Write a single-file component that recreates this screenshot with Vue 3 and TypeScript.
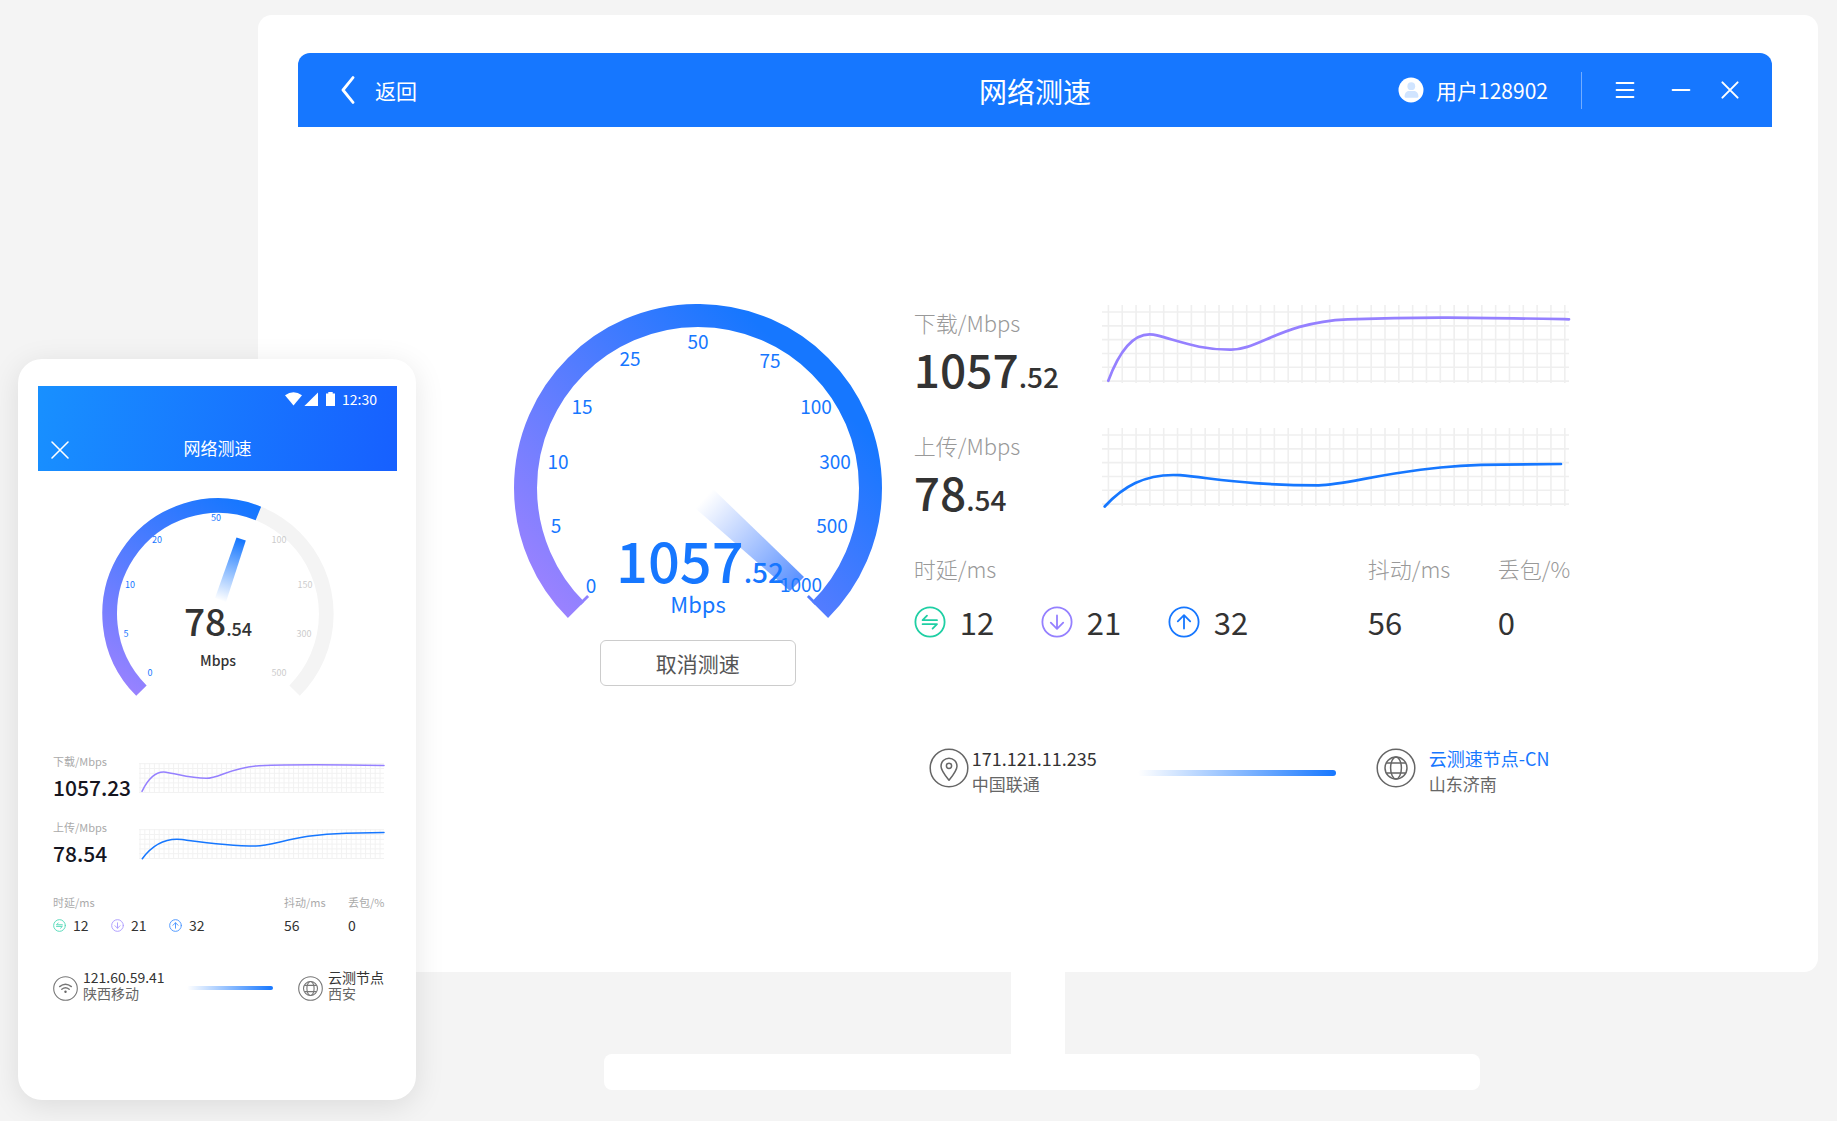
<script setup lang="ts">
interface Label {
  text: string
  x: number
  y: number
  dim?: boolean
}

interface Latency {
  kind: 'ping' | 'down' | 'up'
  value: number
}

interface Grid {
  width: number
  height: number
  x: number
  y: number
  step: number
}

const desktopLabels: Label[] = [
  { text: '0', x: 77, y: 281 },
  { text: '5', x: 42, y: 221 },
  { text: '10', x: 44, y: 157 },
  { text: '15', x: 68, y: 102 },
  { text: '25', x: 116, y: 54 },
  { text: '50', x: 184, y: 37 },
  { text: '75', x: 256, y: 56 },
  { text: '100', x: 302, y: 102 },
  { text: '300', x: 321, y: 157 },
  { text: '500', x: 318, y: 221 },
  { text: '1000', x: 287, y: 280 },
]

const phoneLabels: Label[] = [
  { text: '0', x: 48, y: 177 },
  { text: '5', x: 24, y: 138 },
  { text: '10', x: 28, y: 89 },
  { text: '20', x: 55, y: 44 },
  { text: '50', x: 114, y: 22 },
  { text: '100', x: 177, y: 44, dim: true },
  { text: '150', x: 203, y: 89, dim: true },
  { text: '300', x: 202, y: 138, dim: true },
  { text: '500', x: 177, y: 177, dim: true },
]

const latencies: Latency[] = [
  { kind: 'ping', value: 12 },
  { kind: 'down', value: 21 },
  { kind: 'up', value: 32 },
]

const glyphs: Record<Latency['kind'], string> = {
  ping: 'M23 14.2H8.6L13 9.6M8.6 18.2H23L18.6 22.6',
  down: 'M16 9.4V22.6M9.8 16.6L16 22.8L22.2 16.6',
  up: 'M16 22.6V9.2M9.8 15.4L16 9.2L22.2 15.4',
}

function gridPath(g: Grid): string {
  let d = ''
  for (let x = g.x; x < g.width; x += g.step) d += `M${x.toFixed(2)} 0V${g.height}`
  for (let y = g.y; y < g.height; y += g.step) d += `M0 ${y.toFixed(2)}H${g.width}`
  return d
}

const desktopGrid = gridPath({ width: 467, height: 78, x: 6.4, y: 7, step: 13.83 })
const phoneGrid = gridPath({ width: 245, height: 30, x: 1, y: 0.7, step: 4.8 })

const metrics = [
  {
    name: '下载/Mbps',
    whole: '1057',
    fraction: '.52',
    color: '#9580ff',
    line: 'M6.3 75.7C17 47 32 24 55 30.4C80 37 98 44.7 128 44.7C156 45.5 180 17 245.7 14.3C320 11.5 370 12.5 467 14.3',
  },
  {
    name: '上传/Mbps',
    whole: '78',
    fraction: '.54',
    color: '#1677ff',
    line: 'M2.7 78.5C20 60 42 45 78 47.2C120 51.5 150 57.3 216.7 57.3C250 57 300 37 400 36.7L459 36',
  },
]

const phoneMetrics = [
  {
    name: '下载/Mbps',
    value: '1057.23',
    color: '#9580ff',
    line: 'M3 28.3C9 16 16 7.5 27 9.2C41 11.6 52 15.3 67.3 15.3C80 15.3 92 4.2 120 2.7C158 1.2 195 1.6 245 2.5',
  },
  {
    name: '上传/Mbps',
    value: '78.54',
    color: '#1677ff',
    line: 'M3.3 29.7C12 18 24 8.4 43 10.6C68 14 88 17 117 17C135 16.6 160 4.8 207 4.2L245 3.6',
  },
]
</script>

<template>
  <div class="stage">
    <section class="monitor">
      <div class="screen">
        <header class="titlebar">
          <button class="back" type="button">
            <svg width="16" height="28" viewBox="0 0 16 28" fill="none" stroke="#fff" stroke-width="2.8" stroke-linecap="round" stroke-linejoin="round">
              <path d="M13 1.6L3 14L13 26.4" />
            </svg>
            <span>返回</span>
          </button>
          <h1>网络测速</h1>
          <div class="tools">
            <a class="user" href="#">
              <svg width="26" height="26" viewBox="0 0 26 26">
                <circle cx="13" cy="13" r="12.5" fill="#fff" />
                <circle cx="13.3" cy="9.2" r="3.9" fill="#d0e4ff" />
                <path d="M6.6 19.4C6.6 15.4 9 13.9 11 13.9H15.8C18 13.9 20.4 15.4 20.4 19.4Q20.4 20.8 19.2 20.8H7.8Q6.6 20.8 6.6 19.4Z" fill="#d0e4ff" />
              </svg>
              <span>用户128902</span>
            </a>
            <i class="divider"></i>
            <button type="button" aria-label="菜单">
              <svg width="20" height="20" viewBox="0 0 20 20" stroke="#fff" stroke-width="2" stroke-linecap="round">
                <path d="M1.6 3H18.4M1.6 10H18.4M1.6 17H18.4" />
              </svg>
            </button>
            <button type="button" aria-label="最小化">
              <svg width="20" height="20" viewBox="0 0 20 20" stroke="#fff" stroke-width="2" stroke-linecap="round">
                <path d="M1.6 10H18.4" />
              </svg>
            </button>
            <button type="button" aria-label="关闭">
              <svg width="20" height="20" viewBox="0 0 20 20" stroke="#fff" stroke-width="2" stroke-linecap="round">
                <path d="M2.4 2.4L17.6 17.6M17.6 2.4L2.4 17.6" />
              </svg>
            </button>
          </div>
        </header>

        <main class="board">
          <div class="dial">
            <svg width="368" height="316" viewBox="0 0 368 316">
              <defs>
                <linearGradient id="arc" gradientUnits="userSpaceOnUse" x1="54" y1="314" x2="306" y2="62">
                  <stop offset="0" stop-color="#9a82ff" />
                  <stop offset="0.96" stop-color="#1677ff" />
                </linearGradient>
                <linearGradient id="needle" gradientUnits="userSpaceOnUse" x1="186" y1="199" x2="281" y2="288">
                  <stop offset="0" stop-color="#2a6cff" stop-opacity="0" />
                  <stop offset="1" stop-color="#1c68ff" stop-opacity="0.75" />
                </linearGradient>
              </defs>
              <path d="M62.03 305.97A172.5 172.5 0 1 1 305.97 305.97" fill="none" stroke="url(#arc)" stroke-width="23" />
              <path d="M66 300L74.1 291.9M302 300L293.9 291.9" fill="none" stroke="url(#arc)" stroke-width="2.8" />
              <path d="M181 204L198 184L290 273L276 287Z" fill="url(#needle)" />
              <g class="ticks">
                <text v-for="l in desktopLabels" :key="l.text" :x="l.x" :y="l.y + 8">{{ l.text }}</text>
              </g>
              <text class="speed" x="102" y="279">1057<tspan class="speed-part">.52</tspan></text>
              <text class="speed-unit" x="184" y="309">Mbps</text>
            </svg>
            <button class="cancel" type="button">取消测速</button>
          </div>

          <div class="results">
            <div v-for="m in metrics" :key="m.name" class="metric">
              <div class="metric-text">
                <div class="label">{{ m.name }}</div>
                <div class="value">{{ m.whole }}<small>{{ m.fraction }}</small></div>
              </div>
              <svg class="chart" width="467" height="78" viewBox="0 0 467 78">
                <path :d="desktopGrid" stroke="#efefef" stroke-width="1.6" />
                <path :d="m.line" fill="none" :stroke="m.color" stroke-width="2.7" stroke-linecap="round" />
              </svg>
            </div>

            <div class="stats">
              <div>
                <div class="label">时延/ms</div>
                <ul class="latency">
                  <li v-for="l in latencies" :key="l.kind" :class="l.kind">
                    <svg width="32" height="32" viewBox="0 0 32 32" fill="none" stroke="currentColor" stroke-width="1.8" stroke-linecap="round" stroke-linejoin="round">
                      <circle cx="16" cy="16" r="14.6" />
                      <path :d="glyphs[l.kind]" />
                    </svg>
                    <span>{{ l.value }}</span>
                  </li>
                </ul>
              </div>
              <div>
                <div class="label">抖动/ms</div>
                <div class="number">56</div>
              </div>
              <div>
                <div class="label">丢包/%</div>
                <div class="number">0</div>
              </div>
            </div>

            <div class="route">
              <svg width="40" height="40" viewBox="0 0 40 40" fill="none" stroke="#666" stroke-width="1.5">
                <circle cx="20" cy="20" r="18.8" />
                <path d="M20 32.2C16.5 27.8 12 22.4 12 18.2A8 8 0 0 1 28 18.2C28 22.4 23.5 27.8 20 32.2Z" stroke-linejoin="round" />
                <circle cx="20" cy="17.8" r="2.6" />
              </svg>
              <div class="endpoint client">
                <div class="address">171.121.11.235</div>
                <div class="place">中国联通</div>
              </div>
              <div class="link"></div>
              <svg width="40" height="40" viewBox="0 0 40 40" fill="none" stroke="#666" stroke-width="1.5">
                <circle cx="20" cy="20" r="18.8" />
                <circle cx="20" cy="20" r="11" />
                <ellipse cx="20" cy="20" rx="5.4" ry="11" />
                <path d="M10.4 15H29.6M10.4 25H29.6" />
              </svg>
              <div class="endpoint">
                <a class="node" href="#">云测速节点-CN</a>
                <div class="place">山东济南</div>
              </div>
            </div>
          </div>
        </main>
      </div>
    </section>
    <div class="neck"></div>
    <div class="foot"></div>

    <aside class="phone">
      <header class="phone-head">
        <div class="status">
          <svg width="52" height="16" viewBox="0 0 52 16" fill="#fff">
            <path d="M0 4.2Q8.5 -1.8 17 4.2L8.5 14.4Z" />
            <path d="M19.4 15H33V1.4Z" />
            <path d="M41 2.4H43.3V1H47.7V2.4H50V15H41Z" />
          </svg>
          <span>12:30</span>
        </div>
        <div class="phone-title">
          <button type="button" aria-label="关闭">
            <svg width="20" height="20" viewBox="0 0 20 20" stroke="#fff" stroke-width="1.6" stroke-linecap="round">
              <path d="M2 2L18 18M18 2L2 18" />
            </svg>
          </button>
          <h2>网络测速</h2>
        </div>
      </header>

      <div class="phone-dial">
        <svg width="232" height="198" viewBox="0 0 232 198">
          <defs>
            <linearGradient id="phone-arc" gradientUnits="userSpaceOnUse" x1="30" y1="198" x2="150" y2="10">
              <stop offset="0" stop-color="#9a82ff" />
              <stop offset="1" stop-color="#1677ff" />
            </linearGradient>
            <linearGradient id="phone-needle" gradientUnits="userSpaceOnUse" x1="139" y1="42" x2="119" y2="103">
              <stop offset="0" stop-color="#1677ff" />
              <stop offset="1" stop-color="#1677ff" stop-opacity="0" />
            </linearGradient>
          </defs>
          <path d="M39.42 192.58A108.3 108.3 0 1 1 192.58 192.58" fill="none" stroke="#f4f4f4" stroke-width="14.7" />
          <path d="M39.42 192.58A108.3 108.3 0 0 1 156.4 15.5" fill="none" stroke="url(#phone-arc)" stroke-width="14.7" />
          <path d="M134.5 39.5L143.8 42.6L124 104L113 100Z" fill="url(#phone-needle)" />
          <g class="phone-ticks">
            <text v-for="l in phoneLabels" :key="l.text" :class="{ dim: l.dim }" :x="l.x" :y="l.y + 1">{{ l.text }}</text>
          </g>
          <text class="phone-speed" x="82" y="138">78<tspan class="phone-part">.54</tspan></text>
          <text class="phone-unit" x="116" y="168">Mbps</text>
        </svg>
      </div>

      <div class="phone-body">
        <div v-for="m in phoneMetrics" :key="m.name" class="phone-metric">
          <div>
            <div class="phone-label">{{ m.name }}</div>
            <div class="phone-value">{{ m.value }}</div>
          </div>
          <svg class="chart" width="245" height="30" viewBox="0 0 245 30">
            <path :d="phoneGrid" stroke="#f2f2f2" stroke-width="1" />
            <path :d="m.line" fill="none" :stroke="m.color" stroke-width="1.5" stroke-linecap="round" />
          </svg>
        </div>

        <div class="phone-stats">
          <div>
            <div class="phone-label">时延/ms</div>
            <ul class="phone-latency">
              <li v-for="l in latencies" :key="l.kind" :class="l.kind">
                <svg width="13" height="13" viewBox="0 0 32 32" fill="none" stroke="currentColor" stroke-width="2.4" stroke-linecap="round" stroke-linejoin="round">
                  <circle cx="16" cy="16" r="14.4" />
                  <path :d="glyphs[l.kind]" />
                </svg>
                <span>{{ l.value }}</span>
              </li>
            </ul>
          </div>
          <div>
            <div class="phone-label">抖动/ms</div>
            <div class="phone-number">56</div>
          </div>
          <div>
            <div class="phone-label">丢包/%</div>
            <div class="phone-number">0</div>
          </div>
        </div>

        <div class="phone-route">
          <svg width="25" height="25" viewBox="0 0 25 25" fill="none" stroke="#777" stroke-width="1.1" stroke-linecap="round">
            <circle cx="12.5" cy="12.5" r="11.8" />
            <path d="M6.6 10.6Q12.5 5.8 18.4 10.6M8.8 13.2Q12.5 10.2 16.2 13.2" stroke-width="1.4" />
            <circle cx="12.5" cy="15.8" r="1.2" fill="#666" stroke="none" />
          </svg>
          <div class="phone-endpoint phone-client">
            <div>121.60.59.41</div>
            <div class="phone-place">陕西移动</div>
          </div>
          <div class="phone-link"></div>
          <svg width="25" height="25" viewBox="0 0 25 25" fill="none" stroke="#777" stroke-width="1.1">
            <circle cx="12.5" cy="12.5" r="11.8" />
            <circle cx="12.5" cy="12.5" r="7" />
            <ellipse cx="12.5" cy="12.5" rx="3.6" ry="7" />
            <path d="M6.4 9.4H18.6M6.4 15.6H18.6" />
          </svg>
          <div class="phone-endpoint">
            <div>云测节点</div>
            <div class="phone-place">西安</div>
          </div>
        </div>
      </div>
    </aside>
  </div>
</template>

<style>
body {
  background: #f4f4f4;
}
</style>

<style scoped>
.stage {
  position: relative;
  box-sizing: border-box;
  min-height: 100vh;
  padding: 15px 19px 32px 258px;
  background: #f4f4f4;
  color: #333;
  font-family: "Noto Sans CJK SC", "Noto Sans", sans-serif;
  white-space: nowrap;
}

button {
  padding: 0;
  border: 0;
  background: none;
  color: inherit;
  font: inherit;
  cursor: pointer;
}

a {
  color: inherit;
  text-decoration: none;
}

svg {
  display: block;
  flex: none;
}

h1,
h2,
ul {
  margin: 0;
  padding: 0;
  font-weight: 400;
  list-style: none;
}

.monitor {
  padding: 38px 46px 38px 40px;
  border-radius: 14px;
  background: #fff;
}

.titlebar {
  display: grid;
  grid-template-columns: 1fr auto 1fr;
  align-items: center;
  height: 74px;
  padding: 0 32px;
  border-radius: 12px 12px 0 0;
  background: #1677ff;
  color: #fff;
}

.back {
  display: flex;
  align-items: center;
  justify-self: start;
  gap: 19px;
  padding-left: 10px;
  font-size: 21px;
  line-height: 32px;
}

h1 {
  padding-top: 2px;
  font-size: 28px;
  line-height: 40px;
}

.tools {
  display: flex;
  align-items: center;
  justify-self: end;
}

.tools button + button {
  margin-left: 36px;
}

.tools button:last-child {
  margin-left: 29px;
}

.user {
  display: flex;
  align-items: center;
  gap: 12px;
  font-size: 21px;
  line-height: 32px;
}

.divider {
  width: 1px;
  height: 37px;
  margin: 0 33px;
  background: #73adff;
}

.board {
  display: flex;
  align-items: flex-start;
  justify-content: center;
  gap: 32px;
  padding: 177px 0 138px 14px;
}

.dial {
  display: flex;
  flex-direction: column;
  align-items: center;
  gap: 20px;
}

.dial text {
  fill: #1677ff;
}

.ticks text {
  font-size: 19px;
  text-anchor: middle;
}

.dial .speed {
  font-size: 56px;
  font-weight: 500;
}

.dial .speed-part {
  font-size: 28px;
}

.dial .speed-unit {
  font-size: 22px;
  text-anchor: middle;
}

.cancel {
  width: 196px;
  height: 46px;
  border: 1px solid #ccc;
  border-radius: 6px;
  color: #555;
  font-size: 21px;
}

.results {
  padding-top: 1px;
}

.metric {
  display: grid;
  grid-template-columns: 188px 467px;
  height: 123px;
}

.label {
  padding-top: 3px;
  color: #999;
  font-size: 22px;
  font-weight: 300;
  line-height: 28px;
}

.value {
  margin-top: 6px;
  font-size: 46px;
  font-weight: 500;
  line-height: 52px;
}

.value small {
  font-size: 28px;
}

.chart {
  overflow: visible;
}

.stats {
  display: grid;
  grid-template-columns: 454px 130px auto;
}

.latency {
  display: grid;
  grid-template-columns: repeat(3, 127px);
}

.latency,
.number {
  margin-top: 20px;
  font-size: 31px;
  line-height: 40px;
}

.latency li {
  display: flex;
  align-items: center;
  gap: 14px;
}

.ping {
  color: #1fcfa4;
}

.down {
  color: #9580ff;
}

.up {
  color: #1677ff;
}

.latency span,
.phone-latency span {
  color: #333;
}

.route {
  display: flex;
  align-items: flex-start;
  margin-top: 104px;
  padding-left: 15px;
}

.route svg {
  margin-top: 2px;
}

.endpoint {
  margin-left: 13px;
}

.client {
  width: 166px;
  margin-left: 3px;
}

.address,
.node {
  display: block;
  font-size: 18px;
  line-height: 25px;
}

.node {
  color: #1677ff;
}

.place {
  color: #666;
  font-size: 17px;
  line-height: 25px;
}

.link {
  align-self: center;
  width: 198px;
  height: 6px;
  margin: 4px 40px 0 0;
  border-radius: 3px;
  background: linear-gradient(90deg, rgba(22, 119, 255, 0), #1677ff);
}

.neck {
  width: 54px;
  height: 82px;
  margin: 0 auto;
  background: #fff;
}

.foot {
  height: 36px;
  margin: 0 338px 0 346px;
  border-radius: 8px;
  background: #fff;
}

.phone {
  position: absolute;
  top: 359px;
  left: 18px;
  box-sizing: border-box;
  width: 398px;
  padding: 27px 19px 99px 20px;
  border-radius: 24px;
  background: #fff;
  box-shadow: 0 6px 30px rgba(0, 0, 0, 0.1);
}

.phone-head {
  height: 85px;
  background: linear-gradient(100deg, #1890ff, #1760ff);
  color: #fff;
}

.status {
  display: flex;
  align-items: center;
  justify-content: flex-end;
  gap: 5px;
  height: 26px;
  padding-right: 20px;
  font-size: 14px;
}

.phone-title {
  display: grid;
  grid-template-columns: 1fr auto 1fr;
  align-items: center;
  padding: 23px 12px 0;
}

h2 {
  font-size: 17px;
  line-height: 24px;
}

.phone-title button {
  justify-self: start;
  padding-top: 5px;
}

.phone-dial {
  display: flex;
  justify-content: center;
  padding-top: 27px;
}

.phone-ticks text {
  fill: #1677ff;
  font-size: 9px;
  text-anchor: middle;
}

.phone-ticks .dim {
  fill: #ccc;
}

.phone-speed,
.phone-unit {
  fill: #333;
  font-weight: 500;
}

.phone-speed {
  font-size: 37px;
}

.phone-part {
  font-size: 18px;
}

.phone-unit {
  font-size: 14px;
  text-anchor: middle;
}

.phone-body {
  padding: 57px 13px 0 15px;
}

.phone-metric {
  display: grid;
  grid-template-columns: 86px 245px;
  align-items: start;
  height: 66px;
}

.phone-metric .chart {
  margin-top: 10px;
}

.phone-label {
  color: #aaa;
  font-size: 11px;
  line-height: 16px;
}

.phone-value {
  margin-top: 4px;
  color: #15151f;
  font-size: 21px;
  font-weight: 500;
  line-height: 28px;
}

.phone-stats {
  display: grid;
  grid-template-columns: 231px 64px auto;
  padding-top: 9px;
}

.phone-latency {
  display: grid;
  grid-template-columns: repeat(3, 58px);
}

.phone-latency,
.phone-number {
  margin-top: 5px;
  font-size: 14px;
  line-height: 20px;
}

.phone-latency li {
  display: flex;
  align-items: center;
  gap: 7px;
}

.phone-latency svg {
  opacity: 0.75;
}

.phone-route {
  display: flex;
  align-items: flex-end;
  margin-top: 34px;
  font-size: 14px;
  line-height: 16px;
}

.phone-endpoint {
  margin-left: 5px;
}

.phone-client {
  width: 105px;
}

.phone-place {
  color: #666;
}

.phone-link {
  width: 87px;
  height: 4px;
  margin: 0 25px 11px 0;
  border-radius: 2px;
  background: linear-gradient(90deg, rgba(22, 119, 255, 0), #1677ff);
}
</style>
